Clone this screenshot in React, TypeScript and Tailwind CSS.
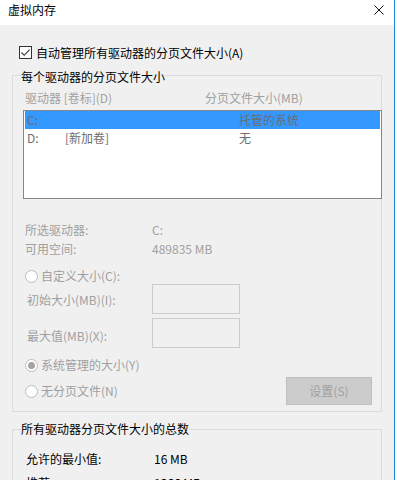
import React from 'react';

const font = "font-['Noto_Sans_CJK_SC','Noto_Sans',sans-serif]";

function Radio({ checked = false }: { checked?: boolean }) {
  return (
    <span className="flex h-[13px] w-[13px] shrink-0 items-center justify-center rounded-full border border-[#bcbcbc] bg-white">
      {checked && <span className="h-[7px] w-[7px] rounded-full bg-[#a3a3a3]" />}
    </span>
  );
}

function Line({ children, className = '' }: { children: React.ReactNode; className?: string }) {
  return <div className={`h-[14px] leading-[14px] whitespace-nowrap ${className}`}>{children}</div>;
}

export default function App() {
  return (
    <div className={`flex h-[480px] w-[397px] overflow-hidden bg-white text-[12px] text-black ${font}`}>
      <div className="flex w-[394px] flex-col">
        {/* Title bar */}
        <div className="flex h-[25px] shrink-0 items-start justify-between bg-white">
          <span className="pl-[8px] pt-[3px] leading-[14px]">虚拟内存</span>
          <svg className="mr-[10px] mt-[5px]" width="10" height="10" viewBox="0 0 10 10">
            <path d="M0.5 0.5 L9.5 9.5 M9.5 0.5 L0.5 9.5" stroke="#111" strokeWidth="1" />
          </svg>
        </div>

        {/* Body */}
        <div className="flex-1 bg-[#f0f0f0] pl-[12px] pr-[12px]">
          <div className="ml-[7px] mt-[21px] flex h-[13px] items-center gap-[4px]">
            <span className="flex h-[13px] w-[13px] items-center justify-center border border-[#333] bg-white">
              <svg width="11" height="11" viewBox="0 0 11 11">
                <path d="M1.5 5.5 L4.2 8.3 L9.6 2.6" fill="none" stroke="#333" strokeWidth="1.1" />
              </svg>
            </span>
            <span className="leading-[14px]">自动管理所有驱动器的分页文件大小(A)</span>
          </div>

          {/* Per-drive group */}
          <div className="mt-[16px] w-[370px] border border-[#dcdcdc] pb-[6px]">
            <div className="-mt-[6px] ml-[8px] w-fit bg-[#f0f0f0] leading-[14px]">每个驱动器的分页文件大小</div>
            <div className="ml-[12px] mt-[7px] flex h-[14px] leading-[14px] text-[#a0a0a0]">
              <span className="w-[180px]">驱动器 [卷标](D)</span>
              <span>分页文件大小(MB)</span>
            </div>
            <div className="ml-[10px] mt-[5px] h-[89px] w-[359px] border border-[#828790] bg-white px-[1px] text-[#6d6d6d]">
              <div className="flex h-[18px] items-center bg-[#3399ff] pl-[2px]">
                <span className="w-[212px]">C:</span>
                <span>托管的系统</span>
              </div>
              <div className="flex h-[18px] items-center pl-[2px]">
                <span className="w-[38px]">D:</span>
                <span className="w-[174px]">[新加卷]</span>
                <span>无</span>
              </div>
            </div>

            <div className="ml-[12px] text-[#a0a0a0]">
              <Line className="mt-[24px] flex">
                <span className="w-[127px]">所选驱动器:</span>
                <span>C:</span>
              </Line>
              <Line className="mt-[5px] flex">
                <span className="w-[127px]">可用空间:</span>
                <span>489835 MB</span>
              </Line>
              <div className="mt-[13px] flex h-[14px] items-center gap-[3px]">
                <Radio />
                <span className="leading-[14px]">自定义大小(C):</span>
              </div>
              <div className="mt-[1px] flex items-center">
                <span className="w-[127px] pl-[2px] pt-[2px] leading-[14px]">初始大小(MB)(I):</span>
                <span className="h-[30px] w-[88px] border border-[#cccccc]" />
              </div>
              <div className="mt-[4px] flex items-center">
                <span className="w-[127px] pl-[2px] pt-[5px] leading-[14px]">最大值(MB)(X):</span>
                <span className="h-[30px] w-[88px] border border-[#cccccc]" />
              </div>
              <div className="mt-[10px] flex h-[14px] items-center gap-[3px]">
                <Radio checked />
                <span className="leading-[14px]">系统管理的大小(Y)</span>
              </div>
              <div className="mt-[5px] flex items-center justify-between pr-[9px]">
                <div className="flex h-[14px] items-center gap-[3px]">
                  <Radio />
                  <span className="leading-[14px]">无分页文件(N)</span>
                </div>
                <button className="h-[28px] w-[86px] border border-[#bfbfbf] bg-[#cccccc] leading-[14px] text-[#a0a0a0]">
                  设置(S)
                </button>
              </div>
            </div>
          </div>

          {/* Totals group */}
          <div className="mt-[17px] h-[80px] w-[370px] border border-[#dcdcdc]">
            <div className="-mt-[8px] ml-[8px] w-fit bg-[#f0f0f0] leading-[14px]">所有驱动器分页文件大小的总数</div>
            <div className="ml-[13px]">
              <Line className="mt-[16px] flex">
                <span className="w-[128px]">允许的最小值:</span>
                <span>16 MB</span>
              </Line>
              <Line className="mt-[10px] flex">
                <span className="w-[128px]">推荐:</span>
                <span>1366 MB</span>
              </Line>
            </div>
          </div>
        </div>
      </div>
      <div className="w-[1px] bg-[#1883d7]" />
      <div className="flex-1 bg-white" />
    </div>
  );
}
